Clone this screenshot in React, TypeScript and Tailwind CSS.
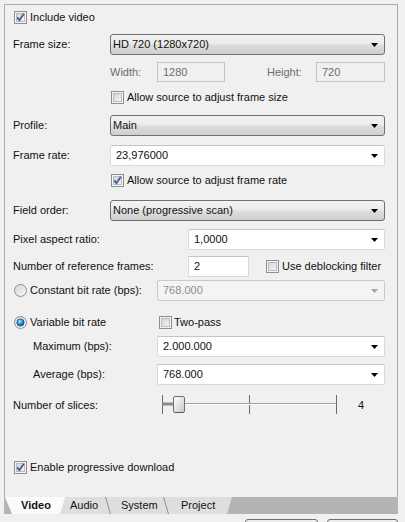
import React from 'react';

function Check({ checked = false }: { checked?: boolean }) {
    return (
        <svg width="13" height="13" viewBox="0 0 13 13" className="shrink-0 block">
            <defs>
                <linearGradient id="cbg" x1="0" y1="0" x2="1" y2="1">
                    <stop offset="0" stopColor="#cfd3d8" />
                    <stop offset="1" stopColor="#f7f7f7" />
                </linearGradient>
            </defs>
            <rect x="0.5" y="0.5" width="12" height="12" fill="#f4f4f4" stroke="#8e8f8f" />
            <rect x="2.5" y="2.5" width="8" height="8" fill="url(#cbg)" stroke="#b9bdc3" />
            {checked && (
                <path d="M3.2 6.4 L5.4 9.2 L9.8 2.8" fill="none" stroke="#4a5f97" strokeWidth="1.9" strokeLinejoin="round" />
            )}
        </svg>
    );
}

function Radio({ checked = false }: { checked?: boolean }) {
    return (
        <svg width="13" height="13" viewBox="0 0 13 13" className="shrink-0 block">
            <defs>
                <linearGradient id="rbg" x1="0" y1="0" x2="1" y2="1">
                    <stop offset="0" stopColor="#d2d5da" />
                    <stop offset="1" stopColor="#f8f8f8" />
                </linearGradient>
                <radialGradient id="rdot" cx="0.4" cy="0.35" r="0.7">
                    <stop offset="0" stopColor="#b9e6ff" />
                    <stop offset="0.45" stopColor="#3d9ad8" />
                    <stop offset="1" stopColor="#0d4a86" />
                </radialGradient>
            </defs>
            <circle cx="6.5" cy="6.5" r="6" fill="url(#rbg)" stroke="#8e8f8f" />
            {checked && <circle cx="6.5" cy="6.5" r="3.6" fill="url(#rdot)" stroke="#1b4f84" strokeWidth="0.8" />}
        </svg>
    );
}

function Arrow({ disabled = false }: { disabled?: boolean }) {
    return (
        <svg width="7" height="4" viewBox="0 0 7 4" className="block shrink-0">
            <polygon points="0,0 7,0 3.5,4" fill={disabled ? '#a3a3a3' : '#000'} />
        </svg>
    );
}

function Dropdown({ value, className }: { value: string; className: string }) {
    return (
        <div className={`flex h-[21px] items-center justify-between rounded-[3px] border border-[#707070] bg-[linear-gradient(to_bottom,#f3f3f3_0%,#ebebeb_48%,#dddddd_52%,#cfcfcf_100%)] pl-[2px] pr-[6px] ${className}`}>
            <span>{value}</span>
            <Arrow />
        </div>
    );
}

function Combo({ value, className, disabled = false }: { value: string; className: string; disabled?: boolean }) {
    return (
        <div className={`flex h-[21px] items-center justify-between rounded-[2px] border pl-[5px] pr-[6px] ${disabled ? 'border-[#c9c9c9] bg-[#f4f4f4] text-[#8d8d8d]' : 'border-[#dadada] border-t-[#c4c4c4] bg-white'} ${className}`}>
            <span>{value}</span>
            <Arrow disabled={disabled} />
        </div>
    );
}

function Slider() {
    return (
        <svg width="182" height="22" viewBox="0 0 182 22" className="block shrink-0">
            <defs>
                <linearGradient id="thumb" x1="0" y1="0" x2="1" y2="1">
                    <stop offset="0" stopColor="#ffffff" />
                    <stop offset="1" stopColor="#c9c9c9" />
                </linearGradient>
            </defs>
            {[4, 91, 178].map((x) => (
                <line key={x} x1={x + 0.5} y1="1" x2={x + 0.5} y2="20" stroke="#6b6b6b" />
            ))}
            <line x1="4" y1="9.5" x2="178" y2="9.5" stroke="#a0a0a0" />
            <line x1="4" y1="10.5" x2="178" y2="10.5" stroke="#ffffff" />
            <rect x="4" y="8.5" width="12" height="3" fill="#8a8a8a" />
            <rect x="15.5" y="2.5" width="11" height="16" rx="1.5" fill="url(#thumb)" stroke="#707070" />
            <line x1="16.5" y1="18.5" x2="26" y2="18.5" stroke="#5e5e5e" />
        </svg>
    );
}

function Sep() {
    return (
        <svg width="6" height="17" viewBox="0 0 6 17" className="block shrink-0">
            <line x1="0.5" y1="0" x2="5.5" y2="17" stroke="#8f8f8f" />
        </svg>
    );
}

export default function App() {
    return (
        <div className="w-[405px] h-[522px] overflow-hidden bg-[#f0f0f0] text-[11px] leading-none text-[#111] [font-family:'Liberation_Sans',Arial,sans-serif]">
            <div className="pt-[4px] pl-[4px]">
                <div className="flex h-[493px] w-[394px] flex-col border-l border-r border-t border-[#acacac] pl-[8px] pr-[12px]">
                    <div className="mt-[5px] flex h-[14px] items-center">
                        <span className="ml-[1px]"><Check checked /></span>
                        <span className="ml-[3px]">Include video</span>
                    </div>

                    <div className="mt-[10px] flex h-[21px] items-center">
                        <span className="w-[97px]">Frame size:</span>
                        <Dropdown value="HD 720 (1280x720)" className="w-[275px]" />
                    </div>

                    <div className="mt-[7px] flex h-[20px] items-center text-[#6d6d6d]">
                        <span className="w-[97px]" />
                        <span className="w-[47px]">Width:</span>
                        <div className="flex h-[20px] w-[68px] items-center border border-[#c3c3c3] pl-[5px]">1280</div>
                        <span className="w-[42px]" />
                        <span className="w-[49px]">Height:</span>
                        <div className="flex h-[20px] w-[69px] items-center border border-[#c3c3c3] pl-[5px]">720</div>
                    </div>

                    <div className="mt-[8px] flex h-[14px] items-center">
                        <span className="w-[98px]" />
                        <Check />
                        <span className="ml-[3px]">Allow source to adjust frame size</span>
                    </div>

                    <div className="mt-[11px] flex h-[21px] items-center">
                        <span className="w-[97px]">Profile:</span>
                        <Dropdown value="Main" className="w-[275px]" />
                    </div>

                    <div className="mt-[9px] flex h-[21px] items-center">
                        <span className="w-[97px]">Frame rate:</span>
                        <Combo value="23,976000" className="w-[275px]" />
                    </div>

                    <div className="mt-[7px] flex h-[14px] items-center">
                        <span className="w-[98px]" />
                        <Check checked />
                        <span className="ml-[3px]">Allow source to adjust frame rate</span>
                    </div>

                    <div className="mt-[13px] flex h-[21px] items-center">
                        <span className="w-[97px]">Field order:</span>
                        <Dropdown value="None (progressive scan)" className="w-[275px]" />
                    </div>

                    <div className="mt-[8px] flex h-[21px] items-center">
                        <span className="w-[175px]">Pixel aspect ratio:</span>
                        <Combo value="1,0000" className="w-[197px]" />
                    </div>

                    <div className="mt-[6px] flex h-[21px] items-center">
                        <span className="w-[175px]">Number of reference frames:</span>
                        <div className="flex h-[21px] w-[61px] items-center border border-[#dadada] border-t-[#c4c4c4] bg-white pl-[5px]">2</div>
                        <span className="w-[17px]" />
                        <Check />
                        <span className="ml-[3px]">Use deblocking filter</span>
                    </div>

                    <div className="mt-[3px] flex h-[21px] items-center">
                        <div className="flex w-[144px] items-center">
                            <span className="ml-[1px]"><Radio /></span>
                            <span className="ml-[3px]">Constant bit rate (bps):</span>
                        </div>
                        <Combo value="768.000" className="w-[228px]" disabled />
                    </div>

                    <div className="mt-[14px] flex h-[14px] items-center">
                        <div className="flex w-[144px] items-center">
                            <span className="ml-[1px]"><Radio checked /></span>
                            <span className="ml-[3px]">Variable bit rate</span>
                        </div>
                        <span className="w-[2px]" />
                        <Check />
                        <span className="ml-[2px]">Two-pass</span>
                    </div>

                    <div className="mt-[7px] flex h-[21px] items-center">
                        <span className="ml-[20px] w-[124px]">Maximum (bps):</span>
                        <Combo value="2.000.000" className="w-[228px]" />
                    </div>

                    <div className="mt-[7px] flex h-[21px] items-center">
                        <span className="ml-[20px] w-[124px]">Average (bps):</span>
                        <Combo value="768.000" className="w-[228px]" />
                    </div>

                    <div className="mt-[11px] flex h-[18px] items-center">
                        <span className="w-[145px]">Number of slices:</span>
                        <Slider />
                        <span className="w-[18px]" />
                        <span>4</span>
                    </div>

                    <div className="mt-[46px] flex h-[14px] items-center">
                        <span className="ml-[1px]"><Check checked /></span>
                        <span className="ml-[3px]">Enable progressive download</span>
                    </div>
                </div>

                <div className="flex h-[17px] w-[394px] items-stretch bg-[#b4b4b4]">
                    <div className="relative z-10 ml-[1px] flex w-[60px] items-center justify-center bg-[#fbfbfb] pl-[2px] font-bold [clip-path:polygon(0_0,100%_0,calc(100%_-_5px)_100%,7px_100%)]">
                        Video
                    </div>
                    <div className="-ml-[7px] flex w-[174px] items-stretch bg-[#dedede] [clip-path:polygon(0_0,100%_0,calc(100%_-_5px)_100%,0_100%)]">
                        <div className="flex w-[47px] items-center pl-[12px]">Audio</div>
                        <Sep />
                        <div className="flex w-[52px] items-center pl-[10px]">System</div>
                        <Sep />
                        <div className="flex items-center pl-[12px]">Project</div>
                    </div>
                </div>

                <div className="mt-[5px] flex">
                    <div className="ml-[241px] h-[20px] w-[73px] rounded-[3px] border border-[#707070] bg-[#ececec]" />
                    <div className="ml-[9px] h-[20px] w-[71px] rounded-[3px] border border-[#707070] bg-[#ececec]" />
                </div>
            </div>
        </div>
    );
}
